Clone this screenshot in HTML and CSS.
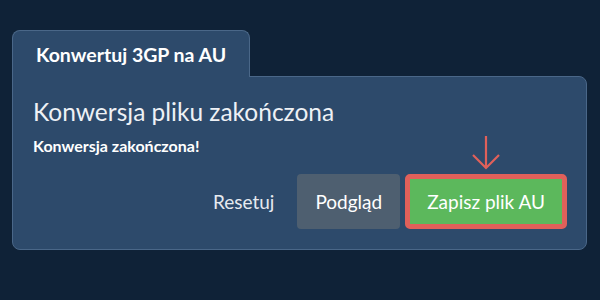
FILE: index.html
```html
<!DOCTYPE html>
<html lang="pl">
<head>
  <meta charset="UTF-8">
  <meta name="viewport" content="width=device-width, initial-scale=1.0">
  <title>Konwertuj 3GP na AU</title>
  <link rel="stylesheet" href="styles.css">
</head>
<body>
  <div class="converter">
    <div class="tab">Konwertuj 3GP na AU</div>
    <div class="panel">
      <h2>Konwersja pliku zakończona</h2>
      <p class="status">Konwersja zakończona!</p>
      <div class="actions">
        <button class="btn btn-link">Resetuj</button>
        <button class="btn btn-preview">Podgląd</button>
        <div class="save-wrap">
          <svg class="arrow" width="30" height="36" viewBox="0 0 30 36">
            <path d="M15 1 V33 M2 20 L15 33 L28 20" fill="none" stroke="#e0605a" stroke-width="2.2"/>
          </svg>
          <button class="btn btn-save">Zapisz plik AU</button>
        </div>
      </div>
    </div>
  </div>
</body>
</html>
```

FILE: styles.css
```css
body {
  font-family: Lato, "Open Sans", sans-serif;
  background-color: #0f2237;
  margin: 0;
  padding: 30px 13px 0 12px;
  color: #fff;
}
.tab {
  display: inline-block;
  position: relative;
  background: #2d4a6b;
  border: 1px solid #4a6788;
  border-bottom: none;
  border-radius: 8px 8px 0 0;
  padding: 12px 23px 11px;
  margin-bottom: -1px;
  font-size: 19.5px;
  line-height: 23px;
  font-weight: bold;
}
.panel {
  background: #2d4a6b;
  border: 1px solid #4a6788;
  border-radius: 0 8px 8px 8px;
  padding: 20px 19px 20px 20px;
}
h2 {
  margin: 0 0 10px;
  font-size: 24.5px;
  line-height: 29px;
  font-weight: normal;
  color: #eef1f5;
}
.status {
  margin: 0 0 19px;
  font-size: 16px;
  line-height: 19px;
  font-weight: bold;
}
.actions {
  display: flex;
  justify-content: flex-end;
  align-items: center;
  gap: 5px;
}
.btn {
  font-family: Lato, "Open Sans", sans-serif;
  font-size: 19px;
  line-height: 23px;
  font-weight: normal;
  color: #fff;
  border: none;
  border-radius: 4px;
  padding: 16px 18px;
  cursor: pointer;
}
.btn-link {
  background: transparent;
  color: #e6eaf0;
}
.btn-preview {
  background-color: #4e5f70;
}
.save-wrap {
  position: relative;
}
.arrow {
  position: absolute;
  left: 50%;
  top: -39px;
  margin-left: -15px;
}
.btn-save {
  background-color: #5cb85c;
  border: 5px solid #e0605a;
  border-radius: 5px;
  padding: 11px 17px;
}
```
